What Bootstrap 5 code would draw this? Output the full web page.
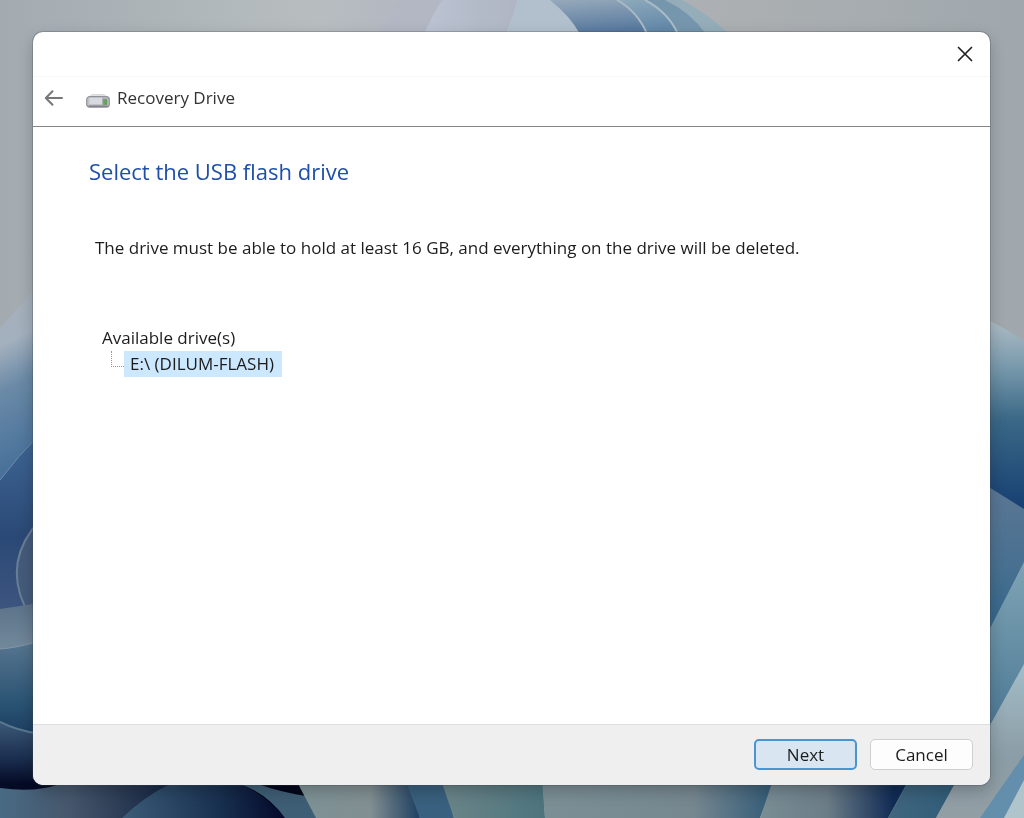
<!DOCTYPE html>
<html lang="en">
<head>
<meta charset="utf-8">
<meta name="viewport" content="width=device-width, initial-scale=1">
<title>Recovery Drive</title>
<link href="https://cdn.jsdelivr.net/npm/bootstrap@5.3.0/dist/css/bootstrap.min.css" rel="stylesheet">
<style>
body { font-family: "Open Sans", "Noto Sans", sans-serif; font-size: 17px; line-height: 26px; color: #1c1c1c; background: #a8afb3; }
.wallpaper { position: fixed; inset: 0; width: 100%; height: 100%; z-index: -1; }
.desktop { padding: 32px 34px 33px 33px; }
.wizard { background: #fff; border-radius: 10px; box-shadow: 0 0 0 1px rgba(60,70,80,.28), 0 6px 16px rgba(0,0,0,.22); overflow: hidden; }
.title-strip { height: 45px; padding-right: 14px; border-bottom: 1px solid #f7f7f7; }
.wizard-head { height: 50px; padding: 0 11px 8px; border-bottom: 1px solid #868686; color: #333; }
.plain-btn { border: 0; background: none; padding: 0; display: flex; }
.drive-icon { margin: 7px 7px 0 22px; }
.wizard-body { padding: 27px 56px; }
.step-title { font-size: 22px; line-height: 34px; color: #1f4fa8; margin-bottom: 47px; }
.step-note { padding-left: 6px; margin-bottom: 64px; }
.tree { padding-left: 13px; }
.tree-branch { width: 13px; height: 16px; margin-left: 9px; border-left: 1px dotted #999; border-bottom: 1px dotted #999; }
.tree-item { background: #cce8ff; padding: 0 8px 0 6px; }
.wizard-foot { height: 61px; padding: 0 17px 1px; gap: 13px; background: #efefef; border-top: 1px solid #dedede; }
.dlg-btn { --bs-btn-font-size: 17px; --bs-btn-line-height: 24px; --bs-btn-padding-y: 2px; --bs-btn-padding-x: 8px; --bs-btn-border-radius: 5px; --bs-btn-color: #1c1c1c; --bs-btn-bg: #fdfdfd; --bs-btn-border-color: #cfcfcf; --bs-btn-hover-bg: #e6f1fa; --bs-btn-hover-color: #1c1c1c; --bs-btn-hover-border-color: #2c82c9; width: 103px; height: 31px; }
.dlg-btn-main { --bs-btn-bg: #d9e6f2; --bs-btn-border-color: #4a94d0; --bs-btn-border-width: 2px; --bs-btn-padding-y: 1px; }
</style>
</head>
<body>
<svg class="wallpaper" viewBox="0 0 1024 818" preserveAspectRatio="none" aria-hidden="true">
  <defs>
    <linearGradient id="sky"><stop offset="0" stop-color="#a3abb1"/><stop offset=".3" stop-color="#b7bdbf"/><stop offset=".45" stop-color="#b1b5c3"/><stop offset=".72" stop-color="#abafb2"/><stop offset="1" stop-color="#a0a8ad"/></linearGradient>
    <linearGradient id="l1" x2="0.1" y2="1"><stop offset="0" stop-color="#a7b0b8"/><stop offset=".3" stop-color="#a3b0be"/><stop offset=".52" stop-color="#6b8aa7"/><stop offset="1" stop-color="#406c98"/></linearGradient>
    <linearGradient id="l2" x2="0" y2="1"><stop offset="0" stop-color="#3f6795"/><stop offset=".55" stop-color="#2b4976"/><stop offset="1" stop-color="#3f5780"/></linearGradient>
    <linearGradient id="l3" x2="0" y2="1"><stop offset="0" stop-color="#5c7288"/><stop offset="1" stop-color="#73899b"/></linearGradient>
    <linearGradient id="l4" x2="0" y2="1"><stop offset="0" stop-color="#587690"/><stop offset=".6" stop-color="#2a5373"/><stop offset="1" stop-color="#17385b"/></linearGradient>
    <linearGradient id="l5" x2="0" y2="1"><stop offset="0" stop-color="#3c5878"/><stop offset=".45" stop-color="#1c3051"/><stop offset=".8" stop-color="#050a25"/></linearGradient>
    <linearGradient id="r1" x2="0" y2="1"><stop offset="0" stop-color="#b0bec7"/><stop offset=".25" stop-color="#7798ab"/><stop offset=".5" stop-color="#3b6887"/><stop offset="1" stop-color="#123b70"/></linearGradient>
    <linearGradient id="r2" x2="0" y2="1"><stop offset="0" stop-color="#5b7795"/><stop offset=".5" stop-color="#487090"/><stop offset="1" stop-color="#2e6288"/></linearGradient>
    <linearGradient id="r3" x2="0" y2="1"><stop offset="0" stop-color="#7fa3b4"/><stop offset=".6" stop-color="#5f89a1"/><stop offset="1" stop-color="#487592"/></linearGradient>
    <linearGradient id="r4" x2="0" y2="1"><stop offset="0" stop-color="#a3bdc8"/><stop offset=".6" stop-color="#8b9da6"/><stop offset="1" stop-color="#929ea4"/></linearGradient>
    <linearGradient id="t1" x2="0.2" y2="1"><stop offset="0" stop-color="#97aabb"/><stop offset="1" stop-color="#57799f"/></linearGradient>
    <linearGradient id="t2" x2="0.3" y2="1"><stop offset="0" stop-color="#8eaabc"/><stop offset="1" stop-color="#6288a8"/></linearGradient>
    <linearGradient id="t0"><stop offset="0" stop-color="#bcc3d3"/><stop offset=".6" stop-color="#b2bac8"/><stop offset="1" stop-color="#b0b5c3"/></linearGradient>
    <linearGradient id="b1" x2="1" y2="0"><stop offset="0" stop-color="#486a84"/><stop offset=".4" stop-color="#46576c"/><stop offset="1" stop-color="#11213f"/></linearGradient>
    <linearGradient id="b2"><stop offset="0" stop-color="#3c5c78"/><stop offset=".6" stop-color="#18304f"/><stop offset="1" stop-color="#04082a"/></linearGradient>
    <linearGradient id="b3"><stop offset="0" stop-color="#7c9295"/><stop offset=".6" stop-color="#828f92"/><stop offset="1" stop-color="#1d3f62"/></linearGradient>
    <linearGradient id="b4"><stop offset="0" stop-color="#6b8588"/><stop offset="1" stop-color="#4d747e"/></linearGradient>
    <linearGradient id="b5"><stop offset="0" stop-color="#7b8f95"/><stop offset=".65" stop-color="#768790"/><stop offset="1" stop-color="#315a77"/></linearGradient>
    <linearGradient id="b6"><stop offset="0" stop-color="#788d94"/><stop offset=".45" stop-color="#6c7d88"/><stop offset=".9" stop-color="#102b54"/></linearGradient>
    <linearGradient id="b7"><stop offset="0" stop-color="#40667d"/><stop offset="1" stop-color="#305c79"/></linearGradient>
  </defs>
  <rect width="1024" height="818" fill="url(#sky)"/>
  <!-- upper petals -->
  <path d="M400 0H445Q432 14 424 34H380Z" fill="#b3b7c3"/>
  <path d="M442 0H518L505 34H424Q433 14 442 0Z" fill="url(#t0)"/>
  <path d="M517 0H560L580 34H505Q513 18 517 0Z" fill="#b2c0cd"/>
  <path d="M550 0H622Q638 16 647 34H580Q570 16 550 0Z" fill="url(#t1)"/>
  <path d="M617 0H652Q668 14 678 34H647Q636 12 617 0Z" fill="url(#t2)"/>
  <path d="M645 0H672Q696 14 706 34H678Q666 12 645 0Z" fill="#7696ae"/>
  <path d="M665 0H682Q704 12 730 34H706Q690 12 665 0Z" fill="#94adb9"/>
  <path d="M617 0Q638 12 647 34M645 0Q668 12 678 34" fill="none" stroke="#a9bac6" stroke-width="2"/>
  <!-- left petals -->
  <path d="M0 328 40 284V490H0Z" fill="url(#l1)"/>
  <path d="M0 480Q18 456 40 434V620H0Z" fill="url(#l2)"/>
  <path d="M0 480Q18 456 40 434" fill="none" stroke="#728baa" stroke-width="1"/>
  <path d="M40 520Q3 560 25 607H40Z" fill="#445b7b" stroke="#687f98" stroke-width="2"/>
  <path d="M0 609 40 603V650H0Z" fill="url(#l3)"/>
  <path d="M0 649Q16 648 40 641V745H0Z" fill="url(#l4)"/>
  <path d="M0 649Q16 648 40 641" fill="none" stroke="#8196a6"/>
  <path d="M0 722Q18 731 60 736V800H0Z" fill="url(#l5)"/>
  <path d="M0 722Q18 731 40 734" fill="none" stroke="#5b7891" stroke-width="2"/>
  <!-- lower petals -->
  <path d="M60 780H310V818H60Z" fill="#03071c"/>
  <path d="M0 788Q35 793 60 784H175V818H0Z" fill="url(#b1)"/>
  <path d="M122 818Q145 796 170 784H240Q264 794 286 818Z" fill="url(#b2)"/>
  <path d="M240 784Q268 794 285 818H318L306 796Q280 792 258 784Z" fill="#3e5e75"/>
  <path d="M296 780H410L420 818H316Z" fill="url(#b3)"/>
  <path d="M405 780H443L454 818H420Z" fill="#39607e"/>
  <path d="M441 780H543L545 818H454Z" fill="url(#b4)"/>
  <path d="M542 780H775L760 818H545Z" fill="url(#b5)"/>
  <path d="M773 780H909L888 818H760Z" fill="url(#b6)"/>
  <path d="M909 780H957L936 818H888Z" fill="url(#b7)"/>
  <!-- right petals -->
  <path d="M984 318Q1008 330 1024 341V520H984Z" fill="url(#r1)"/>
  <path d="M984 484 1024 509V600L984 650Z" fill="url(#r2)"/>
  <path d="M1024 562V670L984 740V640Z" fill="url(#r3)"/>
  <path d="M1024 664V818H936L957 780 984 736Z" fill="url(#r4)"/>
  <path d="M1024 755V784L1004 818H980Z" fill="#648fac"/>
  <path d="M1024 780V818H1004Z" fill="#b0c4cc"/>
</svg>

<div class="desktop d-flex min-vh-100">
  <main class="wizard d-flex flex-column flex-grow-1">
    <div class="title-strip d-flex align-items-center justify-content-end">
      <button type="button" class="plain-btn" aria-label="Close">
        <svg width="22" height="22" viewBox="0 0 22 22" fill="none" stroke="#222" stroke-width="1.7" stroke-linecap="round"><path d="M4.500 4.500 17.500 17.500M17.500 4.500 4.500 17.500"/></svg>
      </button>
    </div>
    <header class="wizard-head d-flex align-items-center">
      <button type="button" class="plain-btn" aria-label="Back">
        <svg width="20" height="20" viewBox="0 0 20 20" fill="none" stroke="#777" stroke-width="2" stroke-linecap="round" stroke-linejoin="round"><path d="M18 10H2M8.500 3.200 1.800 10 8.500 16.800"/></svg>
      </button>
      <svg class="drive-icon" width="24" height="14" viewBox="0 0 24 14" aria-hidden="true">
        <path d="M6 .6H18L22.500 4H1.500Z" fill="#e3e4e6" stroke="#c4c4c8" stroke-width=".6"/>
        <rect x=".7" y="2.700" width="22.600" height="10.500" rx="3" fill="#c3c4ca" stroke="#909197" stroke-width="1.200"/>
        <path d="M3.500 3.800H16V10H3.500Z" fill="#d9dae1"/>
        <path d="M2.500 12.200H21.500" stroke="#77787e" stroke-width="1.300"/>
        <rect x="16.500" y="4.500" width="5" height="6.500" rx=".6" fill="#8b998a"/>
        <rect x="18.500" y="6" width="2.300" height="4.500" fill="#48b03c"/>
      </svg>
      <span>Recovery Drive</span>
    </header>
    <section class="wizard-body flex-grow-1">
      <h1 class="step-title fw-normal">Select the USB flash drive</h1>
      <p class="step-note">The drive must be able to hold at least 16 GB, and everything on the drive will be deleted.</p>
      <div class="tree" role="tree">
        <div>Available drive(s)</div>
        <div class="d-flex" role="treeitem" aria-selected="true">
          <span class="tree-branch"></span>
          <span class="tree-item">E:\ (DILUM-FLASH)</span>
        </div>
      </div>
    </section>
    <footer class="wizard-foot d-flex align-items-center justify-content-end">
      <button type="button" class="btn dlg-btn dlg-btn-main">Next</button>
      <button type="button" class="btn dlg-btn">Cancel</button>
    </footer>
  </main>
</div>
<script src="https://cdn.jsdelivr.net/npm/bootstrap@5.3.0/dist/js/bootstrap.bundle.min.js"></script>
</body>
</html>
